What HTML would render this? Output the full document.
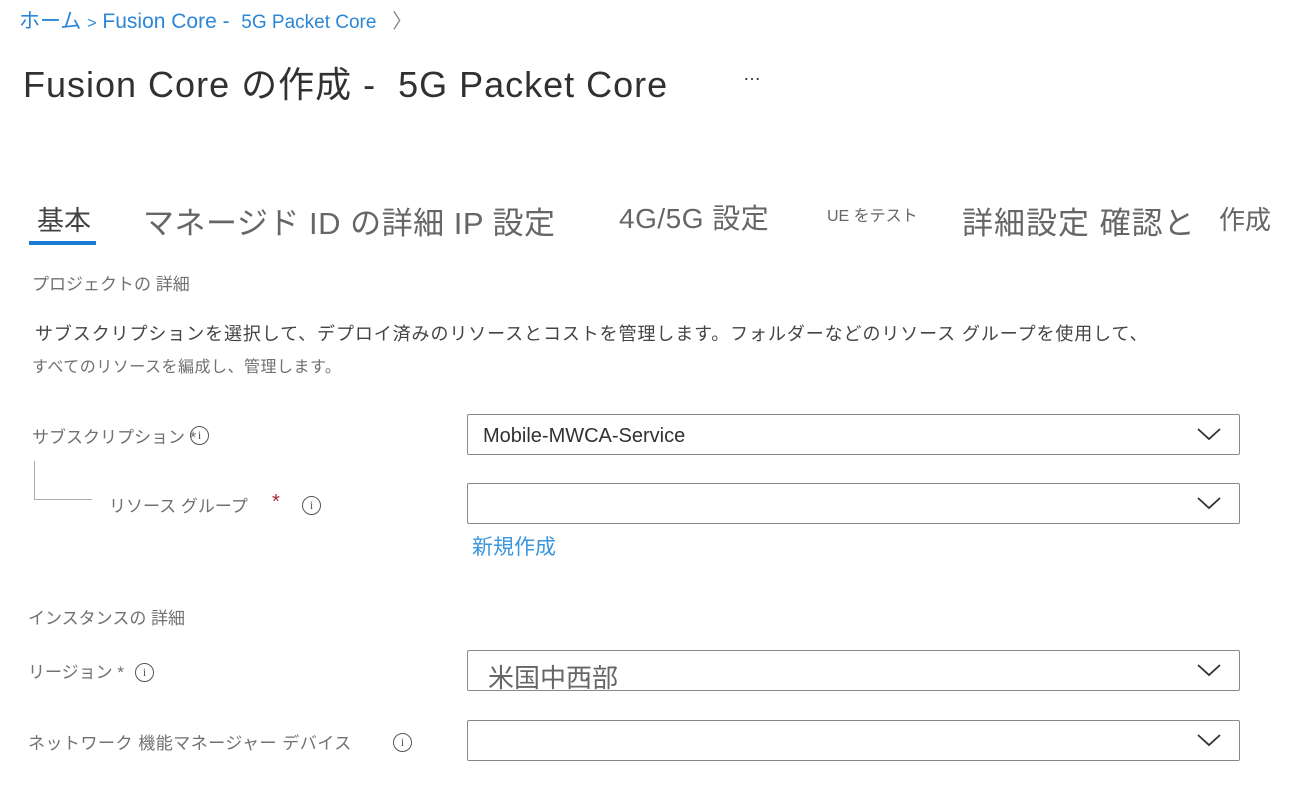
<!DOCTYPE html>
<html><head><meta charset="utf-8"><style>
body{margin:0;width:1293px;height:786px;background:#fff;position:relative;overflow:hidden;font-family:"Liberation Sans","Noto Sans CJK JP",sans-serif;}
.a{position:absolute;white-space:nowrap;}
.lbl{color:#707070;font-size:17px;}
.box{position:absolute;left:467px;width:771px;height:39px;border:1px solid #8a8886;border-radius:2px;}
.chev{position:absolute;right:18px;top:12px;}
.info{position:absolute;width:17px;height:17px;border:1.5px solid #555;border-radius:50%;font-size:12px;text-align:center;line-height:17px;color:#555;font-family:"Liberation Serif",serif;}
</style></head><body>
<div class="a" style="left:19px;top:5px;font-size:21px;color:#2b86d8;">ホーム <span style="font-size:16px">&gt;</span> Fusion Core - &nbsp;<span style="font-size:19px">5G Packet Core</span> <span style="color:#888;font-size:20px;margin-left:10px">〉</span></div>
<div class="a" style="left:23px;top:56px;font-size:36px;color:#323130;letter-spacing:1px;">Fusion Core の作成 - &nbsp;5G Packet Core</div>
<div class="a" style="left:743px;top:64px;font-size:18px;color:#323130;">…</div>

<div class="a" style="left:37px;top:199px;font-size:27px;color:#444;">基本</div>
<div style="position:absolute;left:29px;top:241px;width:67px;height:4px;background:#1a7ad4"></div>
<div class="a" style="left:143px;top:198px;font-size:31px;color:#666;letter-spacing:0.5px;">マネージド ID の詳細 IP 設定</div>
<div class="a" style="left:619px;top:197px;font-size:28px;color:#666;letter-spacing:0.5px;">4G/5G 設定</div>
<div class="a" style="left:827px;top:202px;font-size:16px;color:#666;">UE をテスト</div>
<div class="a" style="left:962px;top:198px;font-size:31px;color:#666;letter-spacing:1px;">詳細設定 確認と</div>
<div class="a" style="left:1219px;top:200px;font-size:26px;color:#666;">作成</div>

<div class="a lbl" style="left:32px;top:270px;">プロジェクトの 詳細</div>
<div class="a" style="left:35px;top:320px;font-size:18px;color:#444;letter-spacing:0.9px;">サブスクリプションを選択して、デプロイ済みのリソースとコストを管理します。フォルダーなどのリソース グループを使用して、</div>
<div class="a" style="left:32px;top:353px;font-size:16px;color:#707070;letter-spacing:0.5px;">すべてのリソースを編成し、管理します。</div>

<div class="a lbl" style="left:32px;top:423px;">サブスクリプション *</div><div class="info" style="left:190px;top:426px">i</div>
<div style="position:absolute;left:34px;top:461px;width:1px;height:39px;background:#aaa"></div>
<div style="position:absolute;left:34px;top:499px;width:58px;height:1px;background:#aaa"></div>
<div class="a lbl" style="left:109px;top:492px;">リソース グループ</div>
<div class="a" style="left:272px;top:491px;color:#a4262c;font-size:20px;">*</div>
<div class="info" style="left:302px;top:496px">i</div>

<div class="box" style="top:414px"><span class="a" style="left:15px;top:10px;font-size:20px;color:#323130">Mobile-MWCA-Service</span><svg class="chev" width="24" height="14"><path d="M1 2 L12 12 L23 2" fill="none" stroke="#323130" stroke-width="1.8"/></svg></div>
<div class="box" style="top:483px"><svg class="chev" width="24" height="14"><path d="M1 2 L12 12 L23 2" fill="none" stroke="#323130" stroke-width="1.8"/></svg></div>
<div class="a" style="left:472px;top:531px;font-size:21px;color:#3a96dd;">新規作成</div>

<div class="a lbl" style="left:28px;top:604px;">インスタンスの 詳細</div>
<div class="a lbl" style="left:28px;top:658px;">リージョン *</div><div class="info" style="left:135px;top:663px">i</div>
<div class="box" style="top:650px"><span class="a" style="left:20px;top:7px;font-size:26px;color:#666">米国中西部</span><svg class="chev" width="24" height="14"><path d="M1 2 L12 12 L23 2" fill="none" stroke="#323130" stroke-width="1.8"/></svg></div>
<div class="a lbl" style="left:28px;top:729px;letter-spacing:0.5px;">ネットワーク 機能マネージャー デバイス</div><div class="info" style="left:393px;top:733px">i</div>
<div class="box" style="top:720px"><svg class="chev" width="24" height="14"><path d="M1 2 L12 12 L23 2" fill="none" stroke="#323130" stroke-width="1.8"/></svg></div>
</body></html>
